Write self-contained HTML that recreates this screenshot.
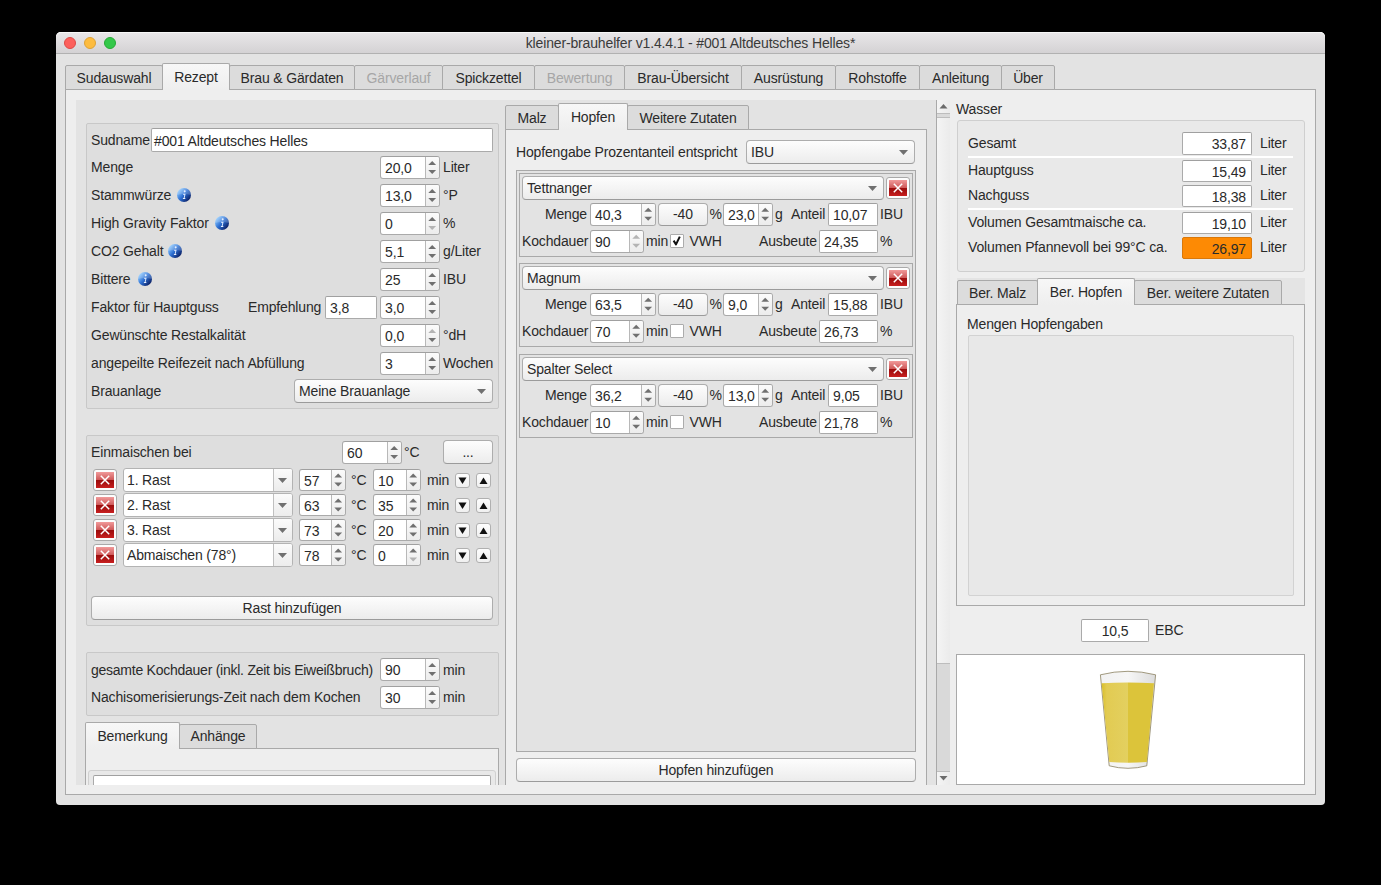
<!DOCTYPE html>
<html><head><meta charset="utf-8"><style>
*{margin:0;padding:0;box-sizing:border-box}
html,body{width:1381px;height:885px;overflow:hidden;background:#000}
body{position:relative;font-family:"Liberation Sans",sans-serif;font-size:14px;letter-spacing:-0.15px;color:#2a2a2a}
div,span,svg{position:absolute}
.t{line-height:18px;white-space:nowrap}
.win{left:56px;top:32px;width:1269px;height:772.5px;background:#e3e3e3;border-radius:5px 5px 4px 4px}
.title{left:56px;top:32px;width:1269px;height:22px;border-radius:5px 5px 0 0;background:linear-gradient(#e9e7e9,#d4d2d4);border-bottom:1px solid #b1b1b1;box-shadow:inset 0 1px 0 #f7f7f7}
.tl{width:12px;height:12px;border-radius:50%;border:0.5px solid}
.pane{background:#eeeeee;border:1px solid #a9a9a9}
.pane2{background:#eeeeee;border:1px solid #a9a9a9}
.pane3{background:#eeeeee;border:1px solid #a9a9a9}
.tb{background:#dcdcdc;border:1px solid #a9a9a9;border-radius:2px 2px 0 0}
.tb.sel{background:linear-gradient(#f7f7f7,#eeeeee);border-bottom:none}
.inner{background:#e3e3e3}
.gb{background:#dedede;border:1px solid #c8c8c8;border-radius:2px}
.gb2{background:#e8e8e8;border:1px solid #d0d0d0;border-radius:3px}
.wg{background:#e9e9e9;border:1px solid #cfcfcf;border-radius:3px}
.sp{background:#fff;border:1px solid #aaaaaa;border-top-color:#a0a0a0;border-radius:3px;overflow:hidden}
.spa{top:0;bottom:0;border-left:1px solid #b8b8b8;background:linear-gradient(#fbfbfb,#ececec)}
.le{background:#fff;border:1px solid #aaaaaa;border-top-color:#a0a0a0;border-radius:2px}
.pb{background:linear-gradient(#fdfdfd,#ececec);border:1px solid #adadad;border-bottom-color:#9b9b9b;border-radius:4px}
.ec{background:#fff;border:1px solid #b3b3b3;border-radius:3px;overflow:hidden}
.eca{top:0;bottom:0;border-left:1px solid #c0c0c0;background:linear-gradient(#fbfbfb,#ececec)}
.xb{background:#fdfdfd;border:1px solid #a9a9a9;border-radius:3px}
.xr{left:2px;top:2px;right:2px;bottom:2px;background:linear-gradient(#f19a9a 0%,#cf5a5a 48%,#9a0c0c 50%,#b31616 80%,#c92020 100%)}
.sb{background:linear-gradient(#fefefe,#f0f0f0);border:1px solid #b0b0b0;border-radius:3px}
.sa{background:#e3e3e3;border:1px solid #a9a9a9}
.hg{background:#e3e3e3;border:1px solid #a9a9a9}
.chk{width:14px;height:14px;background:#fff;border:1px solid #acacac;border-radius:1px}
.chart{background:#e8e8e8;border:1px solid #d2d2d2;border-radius:2px}
.beer{background:#fff;border:1px solid #a9a9a9}
.sbt{background:linear-gradient(90deg,#f4f4f4,#ebebeb)}
.sbband{background:#dadada;border-top:1px solid #bdbdbd;border-bottom:1px solid #bdbdbd}
.sbslider{background:#d9d9d9;border-top:1px solid #bdbdbd;border-bottom:1px solid #bdbdbd}
.a{position:absolute}
</style></head><body>
<div class="win"></div>
<div class="title"></div>
<div class="tl" style="left:64px;top:37px;background:#fc605c;border-color:#de4a46"></div>
<div class="tl" style="left:84px;top:37px;background:#fdbc40;border-color:#dea236"></div>
<div class="tl" style="left:104px;top:37px;background:#34c84a;border-color:#27aa35"></div>
<span class="t" style="left:56px;width:1269px;text-align:center;top:33.65px;color:#3a3a3a">kleiner-brauhelfer v1.4.4.1 - #001 Altdeutsches Helles*</span>
<div class="pane" style="left:65px;top:89px;width:1251px;height:706px;"></div>
<div class="tb" style="left:65px;top:65px;width:98px;height:25px"></div>
<span class="t" style="left:65px;width:98px;text-align:center;top:68.95px;">Sudauswahl</span>
<div class="tb" style="left:229px;top:65px;width:126px;height:25px"></div>
<span class="t" style="left:229px;width:126px;text-align:center;top:68.95px;">Brau &amp; Gärdaten</span>
<div class="tb" style="left:354px;top:65px;width:89px;height:25px"></div>
<span class="t" style="left:354px;width:89px;text-align:center;top:68.95px;color:#a6a6a6">Gärverlauf</span>
<div class="tb" style="left:442px;top:65px;width:93px;height:25px"></div>
<span class="t" style="left:442px;width:93px;text-align:center;top:68.95px;">Spickzettel</span>
<div class="tb" style="left:534px;top:65px;width:91px;height:25px"></div>
<span class="t" style="left:534px;width:91px;text-align:center;top:68.95px;color:#a6a6a6">Bewertung</span>
<div class="tb" style="left:624px;top:65px;width:118px;height:25px"></div>
<span class="t" style="left:624px;width:118px;text-align:center;top:68.95px;">Brau-Übersicht</span>
<div class="tb" style="left:741px;top:65px;width:95px;height:25px"></div>
<span class="t" style="left:741px;width:95px;text-align:center;top:68.95px;">Ausrüstung</span>
<div class="tb" style="left:835px;top:65px;width:85px;height:25px"></div>
<span class="t" style="left:835px;width:85px;text-align:center;top:68.95px;">Rohstoffe</span>
<div class="tb" style="left:919px;top:65px;width:83px;height:25px"></div>
<span class="t" style="left:919px;width:83px;text-align:center;top:68.95px;">Anleitung</span>
<div class="tb" style="left:1001px;top:65px;width:54px;height:25px"></div>
<span class="t" style="left:1001px;width:54px;text-align:center;top:68.95px;">Über</span>
<div class="tb sel" style="left:162px;top:63px;width:68px;height:27px"></div>
<span class="t" style="left:162px;width:68px;text-align:center;top:68.15px;">Rezept</span>
<div style="left:0;top:0;width:1381px;height:785px;overflow:hidden">
<div class="inner" style="left:76px;top:100px;width:860px;height:685px;"></div>
<div class="" style="left:936px;top:100px;width:1px;height:685px;background:#a9a9a9"></div>
<div class="sbt" style="left:937px;top:100px;width:13px;height:685px;"></div>
<div class="sbband" style="left:937px;top:113px;width:13px;height:5px;"></div>
<div class="sbslider" style="left:937px;top:663px;width:13px;height:109px;"></div>
<svg class="a" width="13" height="13" style="left:937px;top:100px"><path d="M2.5 8.5 L10.5 8.5 L6.5 4 Z" fill="#6b6b6b"/></svg>
<svg class="a" width="13" height="13" style="left:937px;top:772px"><path d="M2.5 4 L10.5 4 L6.5 8.5 Z" fill="#6b6b6b"/></svg>
<div class="gb" style="left:86px;top:123px;width:413px;height:286px;"></div>
<span class="t" style="left:91px;top:130.95px;">Sudname</span>
<div class="le" style="left:151px;top:128px;width:342px;height:24px;"></div>
<span class="t" style="left:154px;top:131.85px;">#001 Altdeutsches Helles</span>
<span class="t" style="left:91px;top:157.95px;">Menge</span>
<div class="sp" style="left:380px;top:156px;width:60px;height:23px">
<div class="spa" style="left:44px;width:16px"><svg width="14" height="21" style="position:absolute;left:0;top:0"><path d="M2.3000000000000003 8.0 L10.1 8.0 L6.2 4.1 Z" fill="#707070"/><path d="M2.3000000000000003 13.0 L10.1 13.0 L6.2 16.9 Z" fill="#707070"/></svg></div>
</div>
<span class="t" style="left:385px;top:159.35px;">20,0</span>
<span class="t" style="left:443px;top:157.95px;">Liter</span>
<span class="t" style="left:91px;top:185.95px;">Stammwürze</span>
<div class="sp" style="left:380px;top:184px;width:60px;height:23px">
<div class="spa" style="left:44px;width:16px"><svg width="14" height="21" style="position:absolute;left:0;top:0"><path d="M2.3000000000000003 8.0 L10.1 8.0 L6.2 4.1 Z" fill="#707070"/><path d="M2.3000000000000003 13.0 L10.1 13.0 L6.2 16.9 Z" fill="#707070"/></svg></div>
</div>
<span class="t" style="left:385px;top:187.35px;">13,0</span>
<span class="t" style="left:443px;top:185.95px;">°P</span>
<svg class="a" width="16" height="16" style="left:176px;top:186.5px"><defs><linearGradient id="ib184" x1="0.1" y1="0.2" x2="0.9" y2="0.9"><stop offset="0" stop-color="#8cc8ff"/><stop offset="0.45" stop-color="#2d6fd2"/><stop offset="1" stop-color="#08185a"/></linearGradient></defs><circle cx="8" cy="8" r="7" fill="url(#ib184)"/><path d="M1.1 8 A6.9 6.9 0 0 1 14.9 8 Q8 6.2 1.1 8Z" fill="#fff" opacity="0.18"/><ellipse cx="8.7" cy="4.3" rx="1.0" ry="1.1" fill="#e6efff"/><path d="M7.2 6.8 L9.6 6.8 L8.6 11.1 L9.4 11.1 L9.2 12.0 L6.8 12.0 L7.0 11.1 L7.7 11.1 L8.4 7.7 L7.0 7.7 Z" fill="#e6efff"/></svg>
<span class="t" style="left:91px;top:213.95px;">High Gravity Faktor</span>
<div class="sp" style="left:380px;top:212px;width:60px;height:23px">
<div class="spa" style="left:44px;width:16px"><svg width="14" height="21" style="position:absolute;left:0;top:0"><path d="M2.3000000000000003 8.0 L10.1 8.0 L6.2 4.1 Z" fill="#707070"/><path d="M2.3000000000000003 13.0 L10.1 13.0 L6.2 16.9 Z" fill="#b4b4b4"/></svg></div>
</div>
<span class="t" style="left:385px;top:215.35px;">0</span>
<span class="t" style="left:443px;top:213.95px;">%</span>
<svg class="a" width="16" height="16" style="left:214px;top:214.5px"><defs><linearGradient id="ib222" x1="0.1" y1="0.2" x2="0.9" y2="0.9"><stop offset="0" stop-color="#8cc8ff"/><stop offset="0.45" stop-color="#2d6fd2"/><stop offset="1" stop-color="#08185a"/></linearGradient></defs><circle cx="8" cy="8" r="7" fill="url(#ib222)"/><path d="M1.1 8 A6.9 6.9 0 0 1 14.9 8 Q8 6.2 1.1 8Z" fill="#fff" opacity="0.18"/><ellipse cx="8.7" cy="4.3" rx="1.0" ry="1.1" fill="#e6efff"/><path d="M7.2 6.8 L9.6 6.8 L8.6 11.1 L9.4 11.1 L9.2 12.0 L6.8 12.0 L7.0 11.1 L7.7 11.1 L8.4 7.7 L7.0 7.7 Z" fill="#e6efff"/></svg>
<span class="t" style="left:91px;top:241.95px;">CO2 Gehalt</span>
<div class="sp" style="left:380px;top:240px;width:60px;height:23px">
<div class="spa" style="left:44px;width:16px"><svg width="14" height="21" style="position:absolute;left:0;top:0"><path d="M2.3000000000000003 8.0 L10.1 8.0 L6.2 4.1 Z" fill="#707070"/><path d="M2.3000000000000003 13.0 L10.1 13.0 L6.2 16.9 Z" fill="#707070"/></svg></div>
</div>
<span class="t" style="left:385px;top:243.35px;">5,1</span>
<span class="t" style="left:443px;top:241.95px;">g/Liter</span>
<svg class="a" width="16" height="16" style="left:167px;top:242.5px"><defs><linearGradient id="ib175" x1="0.1" y1="0.2" x2="0.9" y2="0.9"><stop offset="0" stop-color="#8cc8ff"/><stop offset="0.45" stop-color="#2d6fd2"/><stop offset="1" stop-color="#08185a"/></linearGradient></defs><circle cx="8" cy="8" r="7" fill="url(#ib175)"/><path d="M1.1 8 A6.9 6.9 0 0 1 14.9 8 Q8 6.2 1.1 8Z" fill="#fff" opacity="0.18"/><ellipse cx="8.7" cy="4.3" rx="1.0" ry="1.1" fill="#e6efff"/><path d="M7.2 6.8 L9.6 6.8 L8.6 11.1 L9.4 11.1 L9.2 12.0 L6.8 12.0 L7.0 11.1 L7.7 11.1 L8.4 7.7 L7.0 7.7 Z" fill="#e6efff"/></svg>
<span class="t" style="left:91px;top:269.95px;">Bittere</span>
<div class="sp" style="left:380px;top:268px;width:60px;height:23px">
<div class="spa" style="left:44px;width:16px"><svg width="14" height="21" style="position:absolute;left:0;top:0"><path d="M2.3000000000000003 8.0 L10.1 8.0 L6.2 4.1 Z" fill="#707070"/><path d="M2.3000000000000003 13.0 L10.1 13.0 L6.2 16.9 Z" fill="#707070"/></svg></div>
</div>
<span class="t" style="left:385px;top:271.35px;">25</span>
<span class="t" style="left:443px;top:269.95px;">IBU</span>
<svg class="a" width="16" height="16" style="left:137px;top:270.5px"><defs><linearGradient id="ib145" x1="0.1" y1="0.2" x2="0.9" y2="0.9"><stop offset="0" stop-color="#8cc8ff"/><stop offset="0.45" stop-color="#2d6fd2"/><stop offset="1" stop-color="#08185a"/></linearGradient></defs><circle cx="8" cy="8" r="7" fill="url(#ib145)"/><path d="M1.1 8 A6.9 6.9 0 0 1 14.9 8 Q8 6.2 1.1 8Z" fill="#fff" opacity="0.18"/><ellipse cx="8.7" cy="4.3" rx="1.0" ry="1.1" fill="#e6efff"/><path d="M7.2 6.8 L9.6 6.8 L8.6 11.1 L9.4 11.1 L9.2 12.0 L6.8 12.0 L7.0 11.1 L7.7 11.1 L8.4 7.7 L7.0 7.7 Z" fill="#e6efff"/></svg>
<span class="t" style="left:91px;top:297.95px;">Faktor für Hauptguss</span>
<div class="sp" style="left:380px;top:296px;width:60px;height:23px">
<div class="spa" style="left:44px;width:16px"><svg width="14" height="21" style="position:absolute;left:0;top:0"><path d="M2.3000000000000003 8.0 L10.1 8.0 L6.2 4.1 Z" fill="#707070"/><path d="M2.3000000000000003 13.0 L10.1 13.0 L6.2 16.9 Z" fill="#707070"/></svg></div>
</div>
<span class="t" style="left:385px;top:299.35px;">3,0</span>
<span class="t" style="left:91px;top:325.95px;">Gewünschte Restalkalität</span>
<div class="sp" style="left:380px;top:324px;width:60px;height:23px">
<div class="spa" style="left:44px;width:16px"><svg width="14" height="21" style="position:absolute;left:0;top:0"><path d="M2.3000000000000003 8.0 L10.1 8.0 L6.2 4.1 Z" fill="#b4b4b4"/><path d="M2.3000000000000003 13.0 L10.1 13.0 L6.2 16.9 Z" fill="#707070"/></svg></div>
</div>
<span class="t" style="left:385px;top:327.35px;">0,0</span>
<span class="t" style="left:443px;top:325.95px;">°dH</span>
<span class="t" style="left:91px;top:353.95px;">angepeilte Reifezeit nach Abfüllung</span>
<div class="sp" style="left:380px;top:352px;width:60px;height:23px">
<div class="spa" style="left:44px;width:16px"><svg width="14" height="21" style="position:absolute;left:0;top:0"><path d="M2.3000000000000003 8.0 L10.1 8.0 L6.2 4.1 Z" fill="#707070"/><path d="M2.3000000000000003 13.0 L10.1 13.0 L6.2 16.9 Z" fill="#707070"/></svg></div>
</div>
<span class="t" style="left:385px;top:355.35px;">3</span>
<span class="t" style="left:443px;top:353.95px;">Wochen</span>
<span class="t" style="left:248px;top:297.95px;">Empfehlung</span>
<div class="le" style="left:325px;top:296px;width:52px;height:23px;"></div>
<span class="t" style="left:330px;top:299.35px;">3,8</span>
<span class="t" style="left:91px;top:381.95px;">Brauanlage</span>
<div class="pb" style="left:294px;top:379px;width:199px;height:24px"></div>
<svg class="a" width="10" height="6" style="left:477px;top:388.5px"><path d="M0 0 L9 0 L4.5 5 Z" fill="#707070"/></svg>
<span class="t" style="left:299px;top:381.85px;">Meine Brauanlage</span>
<div class="gb" style="left:86px;top:435px;width:413px;height:191px;"></div>
<span class="t" style="left:91px;top:442.95px;">Einmaischen bei</span>
<div class="sp" style="left:342px;top:441px;width:60px;height:23px">
<div class="spa" style="left:44px;width:16px"><svg width="14" height="21" style="position:absolute;left:0;top:0"><path d="M2.3000000000000003 8.0 L10.1 8.0 L6.2 4.1 Z" fill="#707070"/><path d="M2.3000000000000003 13.0 L10.1 13.0 L6.2 16.9 Z" fill="#707070"/></svg></div>
</div>
<span class="t" style="left:347px;top:444.35px;">60</span>
<span class="t" style="left:404px;top:442.95px;">°C</span>
<div class="pb" style="left:443px;top:440px;width:50px;height:24px"></div>
<span class="t" style="left:443px;width:50px;text-align:center;top:442.85px;">...</span>
<div class="xb" style="left:93px;top:469px;width:24px;height:22px"><div class="xr"></div><svg width="24" height="22" style="position:absolute;left:-1px;top:-1px"><path d="M7.8 6.8 L16.2 15.2 M16.2 6.8 L7.8 15.2" stroke="#fff" stroke-width="1.5"/></svg></div>
<div class="ec" style="left:123px;top:468px;width:170px;height:24px"><div class="eca" style="left:148.5px;width:20.5px"></div></div>
<svg class="a" width="10" height="6" style="left:277.75px;top:477.5px"><path d="M0 0 L9 0 L4.5 5 Z" fill="#707070"/></svg>
<span class="t" style="left:127px;top:470.85px;">1. Rast</span>
<div class="sp" style="left:299px;top:469px;width:47px;height:22px">
<div class="spa" style="left:31px;width:16px"><svg width="14" height="20" style="position:absolute;left:0;top:0"><path d="M2.3000000000000003 7.5 L10.1 7.5 L6.2 3.5999999999999996 Z" fill="#707070"/><path d="M2.3000000000000003 12.5 L10.1 12.5 L6.2 16.4 Z" fill="#707070"/></svg></div>
</div>
<span class="t" style="left:304px;top:471.85px;">57</span>
<span class="t" style="left:351px;top:470.95px;">°C</span>
<div class="sp" style="left:373px;top:469px;width:48px;height:22px">
<div class="spa" style="left:32px;width:16px"><svg width="14" height="20" style="position:absolute;left:0;top:0"><path d="M2.3000000000000003 7.5 L10.1 7.5 L6.2 3.5999999999999996 Z" fill="#707070"/><path d="M2.3000000000000003 12.5 L10.1 12.5 L6.2 16.4 Z" fill="#707070"/></svg></div>
</div>
<span class="t" style="left:378px;top:471.85px;">10</span>
<span class="t" style="left:427px;top:470.95px;">min</span>
<div class="sb" style="left:455px;top:473px;width:15px;height:15px"></div>
<svg class="a" width="15" height="15" style="left:455px;top:473px"><path d="M3.5 4.5 L11.5 4.5 L7.5 11 Z" fill="#111"/></svg>
<div class="sb" style="left:476px;top:473px;width:15px;height:15px"></div>
<svg class="a" width="15" height="15" style="left:476px;top:473px"><path d="M3.5 11 L11.5 11 L7.5 4.5 Z" fill="#111"/></svg>
<div class="xb" style="left:93px;top:494px;width:24px;height:22px"><div class="xr"></div><svg width="24" height="22" style="position:absolute;left:-1px;top:-1px"><path d="M7.8 6.8 L16.2 15.2 M16.2 6.8 L7.8 15.2" stroke="#fff" stroke-width="1.5"/></svg></div>
<div class="ec" style="left:123px;top:493px;width:170px;height:24px"><div class="eca" style="left:148.5px;width:20.5px"></div></div>
<svg class="a" width="10" height="6" style="left:277.75px;top:502.5px"><path d="M0 0 L9 0 L4.5 5 Z" fill="#707070"/></svg>
<span class="t" style="left:127px;top:495.85px;">2. Rast</span>
<div class="sp" style="left:299px;top:494px;width:47px;height:22px">
<div class="spa" style="left:31px;width:16px"><svg width="14" height="20" style="position:absolute;left:0;top:0"><path d="M2.3000000000000003 7.5 L10.1 7.5 L6.2 3.5999999999999996 Z" fill="#707070"/><path d="M2.3000000000000003 12.5 L10.1 12.5 L6.2 16.4 Z" fill="#707070"/></svg></div>
</div>
<span class="t" style="left:304px;top:496.85px;">63</span>
<span class="t" style="left:351px;top:495.95px;">°C</span>
<div class="sp" style="left:373px;top:494px;width:48px;height:22px">
<div class="spa" style="left:32px;width:16px"><svg width="14" height="20" style="position:absolute;left:0;top:0"><path d="M2.3000000000000003 7.5 L10.1 7.5 L6.2 3.5999999999999996 Z" fill="#707070"/><path d="M2.3000000000000003 12.5 L10.1 12.5 L6.2 16.4 Z" fill="#707070"/></svg></div>
</div>
<span class="t" style="left:378px;top:496.85px;">35</span>
<span class="t" style="left:427px;top:495.95px;">min</span>
<div class="sb" style="left:455px;top:498px;width:15px;height:15px"></div>
<svg class="a" width="15" height="15" style="left:455px;top:498px"><path d="M3.5 4.5 L11.5 4.5 L7.5 11 Z" fill="#111"/></svg>
<div class="sb" style="left:476px;top:498px;width:15px;height:15px"></div>
<svg class="a" width="15" height="15" style="left:476px;top:498px"><path d="M3.5 11 L11.5 11 L7.5 4.5 Z" fill="#111"/></svg>
<div class="xb" style="left:93px;top:519px;width:24px;height:22px"><div class="xr"></div><svg width="24" height="22" style="position:absolute;left:-1px;top:-1px"><path d="M7.8 6.8 L16.2 15.2 M16.2 6.8 L7.8 15.2" stroke="#fff" stroke-width="1.5"/></svg></div>
<div class="ec" style="left:123px;top:518px;width:170px;height:24px"><div class="eca" style="left:148.5px;width:20.5px"></div></div>
<svg class="a" width="10" height="6" style="left:277.75px;top:527.5px"><path d="M0 0 L9 0 L4.5 5 Z" fill="#707070"/></svg>
<span class="t" style="left:127px;top:520.85px;">3. Rast</span>
<div class="sp" style="left:299px;top:519px;width:47px;height:22px">
<div class="spa" style="left:31px;width:16px"><svg width="14" height="20" style="position:absolute;left:0;top:0"><path d="M2.3000000000000003 7.5 L10.1 7.5 L6.2 3.5999999999999996 Z" fill="#707070"/><path d="M2.3000000000000003 12.5 L10.1 12.5 L6.2 16.4 Z" fill="#707070"/></svg></div>
</div>
<span class="t" style="left:304px;top:521.85px;">73</span>
<span class="t" style="left:351px;top:520.95px;">°C</span>
<div class="sp" style="left:373px;top:519px;width:48px;height:22px">
<div class="spa" style="left:32px;width:16px"><svg width="14" height="20" style="position:absolute;left:0;top:0"><path d="M2.3000000000000003 7.5 L10.1 7.5 L6.2 3.5999999999999996 Z" fill="#707070"/><path d="M2.3000000000000003 12.5 L10.1 12.5 L6.2 16.4 Z" fill="#707070"/></svg></div>
</div>
<span class="t" style="left:378px;top:521.85px;">20</span>
<span class="t" style="left:427px;top:520.95px;">min</span>
<div class="sb" style="left:455px;top:523px;width:15px;height:15px"></div>
<svg class="a" width="15" height="15" style="left:455px;top:523px"><path d="M3.5 4.5 L11.5 4.5 L7.5 11 Z" fill="#111"/></svg>
<div class="sb" style="left:476px;top:523px;width:15px;height:15px"></div>
<svg class="a" width="15" height="15" style="left:476px;top:523px"><path d="M3.5 11 L11.5 11 L7.5 4.5 Z" fill="#111"/></svg>
<div class="xb" style="left:93px;top:544px;width:24px;height:22px"><div class="xr"></div><svg width="24" height="22" style="position:absolute;left:-1px;top:-1px"><path d="M7.8 6.8 L16.2 15.2 M16.2 6.8 L7.8 15.2" stroke="#fff" stroke-width="1.5"/></svg></div>
<div class="ec" style="left:123px;top:543px;width:170px;height:24px"><div class="eca" style="left:148.5px;width:20.5px"></div></div>
<svg class="a" width="10" height="6" style="left:277.75px;top:552.5px"><path d="M0 0 L9 0 L4.5 5 Z" fill="#707070"/></svg>
<span class="t" style="left:127px;top:545.85px;">Abmaischen (78°)</span>
<div class="sp" style="left:299px;top:544px;width:47px;height:22px">
<div class="spa" style="left:31px;width:16px"><svg width="14" height="20" style="position:absolute;left:0;top:0"><path d="M2.3000000000000003 7.5 L10.1 7.5 L6.2 3.5999999999999996 Z" fill="#707070"/><path d="M2.3000000000000003 12.5 L10.1 12.5 L6.2 16.4 Z" fill="#707070"/></svg></div>
</div>
<span class="t" style="left:304px;top:546.85px;">78</span>
<span class="t" style="left:351px;top:545.95px;">°C</span>
<div class="sp" style="left:373px;top:544px;width:48px;height:22px">
<div class="spa" style="left:32px;width:16px"><svg width="14" height="20" style="position:absolute;left:0;top:0"><path d="M2.3000000000000003 7.5 L10.1 7.5 L6.2 3.5999999999999996 Z" fill="#707070"/><path d="M2.3000000000000003 12.5 L10.1 12.5 L6.2 16.4 Z" fill="#b4b4b4"/></svg></div>
</div>
<span class="t" style="left:378px;top:546.85px;">0</span>
<span class="t" style="left:427px;top:545.95px;">min</span>
<div class="sb" style="left:455px;top:548px;width:15px;height:15px"></div>
<svg class="a" width="15" height="15" style="left:455px;top:548px"><path d="M3.5 4.5 L11.5 4.5 L7.5 11 Z" fill="#111"/></svg>
<div class="sb" style="left:476px;top:548px;width:15px;height:15px"></div>
<svg class="a" width="15" height="15" style="left:476px;top:548px"><path d="M3.5 11 L11.5 11 L7.5 4.5 Z" fill="#111"/></svg>
<div class="pb" style="left:91px;top:596px;width:402px;height:24px"></div>
<span class="t" style="left:91px;width:402px;text-align:center;top:598.85px;">Rast hinzufügen</span>
<div class="gb" style="left:86px;top:652px;width:413px;height:64px;"></div>
<span class="t" style="left:91px;top:660.65px;letter-spacing:-0.25px">gesamte Kochdauer (inkl. Zeit bis Eiweißbruch)</span>
<div class="sp" style="left:380px;top:658px;width:60px;height:23px">
<div class="spa" style="left:44px;width:16px"><svg width="14" height="21" style="position:absolute;left:0;top:0"><path d="M2.3000000000000003 8.0 L10.1 8.0 L6.2 4.1 Z" fill="#707070"/><path d="M2.3000000000000003 13.0 L10.1 13.0 L6.2 16.9 Z" fill="#707070"/></svg></div>
</div>
<span class="t" style="left:385px;top:661.35px;">90</span>
<span class="t" style="left:443px;top:660.65px;">min</span>
<span class="t" style="left:91px;top:688.45px;">Nachisomerisierungs-Zeit nach dem Kochen</span>
<div class="sp" style="left:380px;top:686px;width:60px;height:23px">
<div class="spa" style="left:44px;width:16px"><svg width="14" height="21" style="position:absolute;left:0;top:0"><path d="M2.3000000000000003 8.0 L10.1 8.0 L6.2 4.1 Z" fill="#707070"/><path d="M2.3000000000000003 13.0 L10.1 13.0 L6.2 16.9 Z" fill="#707070"/></svg></div>
</div>
<span class="t" style="left:385px;top:689.35px;">30</span>
<span class="t" style="left:443px;top:688.45px;">min</span>
<div class="pane2" style="left:85px;top:748px;width:414px;height:52px;"></div>
<div class="tb" style="left:179px;top:724px;width:78px;height:25px"></div>
<span class="t" style="left:179px;width:78px;text-align:center;top:727.45px;">Anhänge</span>
<div class="tb sel" style="left:85px;top:722px;width:95px;height:27px"></div>
<span class="t" style="left:85px;width:95px;text-align:center;top:726.95px;">Bemerkung</span>
<div class="gb2" style="left:88px;top:770px;width:408px;height:30px;"></div>
<div class="le" style="left:93px;top:775px;width:398px;height:25px;"></div>
<div class="pane2" style="left:505px;top:129px;width:422px;height:671px;"></div>
<div class="tb" style="left:505px;top:105px;width:54px;height:25px"></div>
<span class="t" style="left:505px;width:54px;text-align:center;top:108.95px;">Malz</span>
<div class="tb" style="left:627px;top:105px;width:122px;height:25px"></div>
<span class="t" style="left:627px;width:122px;text-align:center;top:108.95px;">Weitere Zutaten</span>
<div class="tb sel" style="left:558px;top:103px;width:70px;height:27px"></div>
<span class="t" style="left:558px;width:70px;text-align:center;top:107.95px;">Hopfen</span>
<span class="t" style="left:516px;top:142.75px;">Hopfengabe Prozentanteil entspricht</span>
<div class="pb" style="left:746px;top:140px;width:169px;height:24px"></div>
<svg class="a" width="10" height="6" style="left:899px;top:149.5px"><path d="M0 0 L9 0 L4.5 5 Z" fill="#707070"/></svg>
<span class="t" style="left:751px;top:142.85px;">IBU</span>
<div class="sa" style="left:516px;top:170px;width:400px;height:582px;"></div>
<div class="hg" style="left:519px;top:173px;width:394px;height:84px;"></div>
<div class="pb" style="left:522px;top:176px;width:362px;height:24px"></div>
<svg class="a" width="10" height="6" style="left:868px;top:185.5px"><path d="M0 0 L9 0 L4.5 5 Z" fill="#707070"/></svg>
<span class="t" style="left:527px;top:178.85px;">Tettnanger</span>
<div class="xb" style="left:886px;top:177px;width:24px;height:22px"><div class="xr"></div><svg width="24" height="22" style="position:absolute;left:-1px;top:-1px"><path d="M7.8 6.8 L16.2 15.2 M16.2 6.8 L7.8 15.2" stroke="#fff" stroke-width="1.5"/></svg></div>
<span class="t" style="right:794px;top:204.95px;">Menge</span>
<div class="sp" style="left:590px;top:203px;width:66px;height:22.5px">
<div class="spa" style="left:50px;width:16px"><svg width="14" height="20.5" style="position:absolute;left:0;top:0"><path d="M2.3000000000000003 7.75 L10.1 7.75 L6.2 3.8499999999999996 Z" fill="#707070"/><path d="M2.3000000000000003 12.75 L10.1 12.75 L6.2 16.65 Z" fill="#707070"/></svg></div>
</div>
<span class="t" style="left:595px;top:206.10px;">40,3</span>
<div class="pb" style="left:658px;top:202.5px;width:50px;height:23.0px"></div>
<span class="t" style="left:658px;width:50px;text-align:center;top:204.85px;">-40</span>
<span class="t" style="left:709.5px;top:204.95px;">%</span>
<div class="sp" style="left:723px;top:203px;width:50px;height:22.5px">
<div class="spa" style="left:34px;width:16px"><svg width="14" height="20.5" style="position:absolute;left:0;top:0"><path d="M2.3000000000000003 7.75 L10.1 7.75 L6.2 3.8499999999999996 Z" fill="#707070"/><path d="M2.3000000000000003 12.75 L10.1 12.75 L6.2 16.65 Z" fill="#707070"/></svg></div>
</div>
<span class="t" style="left:728px;top:206.10px;">23,0</span>
<span class="t" style="left:775px;top:204.95px;">g</span>
<span class="t" style="left:791px;top:204.95px;">Anteil</span>
<div class="le" style="left:828px;top:203px;width:50px;height:22.5px;"></div>
<span class="t" style="left:833px;top:206.10px;">10,07</span>
<span class="t" style="left:880px;top:204.95px;">IBU</span>
<span class="t" style="left:522px;top:231.95px;">Kochdauer</span>
<div class="sp" style="left:590px;top:230px;width:54px;height:22.5px">
<div class="spa" style="left:38px;width:16px"><svg width="14" height="20.5" style="position:absolute;left:0;top:0"><path d="M2.3000000000000003 7.75 L10.1 7.75 L6.2 3.8499999999999996 Z" fill="#b4b4b4"/><path d="M2.3000000000000003 12.75 L10.1 12.75 L6.2 16.65 Z" fill="#b4b4b4"/></svg></div>
</div>
<span class="t" style="left:595px;top:233.10px;">90</span>
<span class="t" style="left:646px;top:231.95px;">min</span>
<div class="chk" style="left:670px;top:234px"></div>
<svg class="a" width="13" height="13" style="left:670px;top:234px"><path d="M3.6 6.6 L6 10.4 L9.8 2.6" stroke="#111" stroke-width="2" fill="none" stroke-linejoin="round"/></svg>
<span class="t" style="left:689.5px;top:231.95px;">VWH</span>
<span class="t" style="left:759px;top:231.95px;">Ausbeute</span>
<div class="le" style="left:819px;top:230px;width:59px;height:22.5px;"></div>
<span class="t" style="left:824px;top:233.10px;">24,35</span>
<span class="t" style="left:880px;top:231.95px;">%</span>
<div class="hg" style="left:519px;top:263px;width:394px;height:84px;"></div>
<div class="pb" style="left:522px;top:266px;width:362px;height:24px"></div>
<svg class="a" width="10" height="6" style="left:868px;top:275.5px"><path d="M0 0 L9 0 L4.5 5 Z" fill="#707070"/></svg>
<span class="t" style="left:527px;top:268.85px;">Magnum</span>
<div class="xb" style="left:886px;top:267px;width:24px;height:22px"><div class="xr"></div><svg width="24" height="22" style="position:absolute;left:-1px;top:-1px"><path d="M7.8 6.8 L16.2 15.2 M16.2 6.8 L7.8 15.2" stroke="#fff" stroke-width="1.5"/></svg></div>
<span class="t" style="right:794px;top:294.95px;">Menge</span>
<div class="sp" style="left:590px;top:293px;width:66px;height:22.5px">
<div class="spa" style="left:50px;width:16px"><svg width="14" height="20.5" style="position:absolute;left:0;top:0"><path d="M2.3000000000000003 7.75 L10.1 7.75 L6.2 3.8499999999999996 Z" fill="#707070"/><path d="M2.3000000000000003 12.75 L10.1 12.75 L6.2 16.65 Z" fill="#707070"/></svg></div>
</div>
<span class="t" style="left:595px;top:296.10px;">63,5</span>
<div class="pb" style="left:658px;top:292.5px;width:50px;height:23.0px"></div>
<span class="t" style="left:658px;width:50px;text-align:center;top:294.85px;">-40</span>
<span class="t" style="left:709.5px;top:294.95px;">%</span>
<div class="sp" style="left:723px;top:293px;width:50px;height:22.5px">
<div class="spa" style="left:34px;width:16px"><svg width="14" height="20.5" style="position:absolute;left:0;top:0"><path d="M2.3000000000000003 7.75 L10.1 7.75 L6.2 3.8499999999999996 Z" fill="#707070"/><path d="M2.3000000000000003 12.75 L10.1 12.75 L6.2 16.65 Z" fill="#707070"/></svg></div>
</div>
<span class="t" style="left:728px;top:296.10px;">9,0</span>
<span class="t" style="left:775px;top:294.95px;">g</span>
<span class="t" style="left:791px;top:294.95px;">Anteil</span>
<div class="le" style="left:828px;top:293px;width:50px;height:22.5px;"></div>
<span class="t" style="left:833px;top:296.10px;">15,88</span>
<span class="t" style="left:880px;top:294.95px;">IBU</span>
<span class="t" style="left:522px;top:321.95px;">Kochdauer</span>
<div class="sp" style="left:590px;top:320px;width:54px;height:22.5px">
<div class="spa" style="left:38px;width:16px"><svg width="14" height="20.5" style="position:absolute;left:0;top:0"><path d="M2.3000000000000003 7.75 L10.1 7.75 L6.2 3.8499999999999996 Z" fill="#707070"/><path d="M2.3000000000000003 12.75 L10.1 12.75 L6.2 16.65 Z" fill="#707070"/></svg></div>
</div>
<span class="t" style="left:595px;top:323.10px;">70</span>
<span class="t" style="left:646px;top:321.95px;">min</span>
<div class="chk" style="left:670px;top:324px"></div>
<span class="t" style="left:689.5px;top:321.95px;">VWH</span>
<span class="t" style="left:759px;top:321.95px;">Ausbeute</span>
<div class="le" style="left:819px;top:320px;width:59px;height:22.5px;"></div>
<span class="t" style="left:824px;top:323.10px;">26,73</span>
<span class="t" style="left:880px;top:321.95px;">%</span>
<div class="hg" style="left:519px;top:354px;width:394px;height:84px;"></div>
<div class="pb" style="left:522px;top:357px;width:362px;height:24px"></div>
<svg class="a" width="10" height="6" style="left:868px;top:366.5px"><path d="M0 0 L9 0 L4.5 5 Z" fill="#707070"/></svg>
<span class="t" style="left:527px;top:359.85px;">Spalter Select</span>
<div class="xb" style="left:886px;top:358px;width:24px;height:22px"><div class="xr"></div><svg width="24" height="22" style="position:absolute;left:-1px;top:-1px"><path d="M7.8 6.8 L16.2 15.2 M16.2 6.8 L7.8 15.2" stroke="#fff" stroke-width="1.5"/></svg></div>
<span class="t" style="right:794px;top:385.95px;">Menge</span>
<div class="sp" style="left:590px;top:384px;width:66px;height:22.5px">
<div class="spa" style="left:50px;width:16px"><svg width="14" height="20.5" style="position:absolute;left:0;top:0"><path d="M2.3000000000000003 7.75 L10.1 7.75 L6.2 3.8499999999999996 Z" fill="#707070"/><path d="M2.3000000000000003 12.75 L10.1 12.75 L6.2 16.65 Z" fill="#707070"/></svg></div>
</div>
<span class="t" style="left:595px;top:387.10px;">36,2</span>
<div class="pb" style="left:658px;top:383.5px;width:50px;height:23.0px"></div>
<span class="t" style="left:658px;width:50px;text-align:center;top:385.85px;">-40</span>
<span class="t" style="left:709.5px;top:385.95px;">%</span>
<div class="sp" style="left:723px;top:384px;width:50px;height:22.5px">
<div class="spa" style="left:34px;width:16px"><svg width="14" height="20.5" style="position:absolute;left:0;top:0"><path d="M2.3000000000000003 7.75 L10.1 7.75 L6.2 3.8499999999999996 Z" fill="#707070"/><path d="M2.3000000000000003 12.75 L10.1 12.75 L6.2 16.65 Z" fill="#707070"/></svg></div>
</div>
<span class="t" style="left:728px;top:387.10px;">13,0</span>
<span class="t" style="left:775px;top:385.95px;">g</span>
<span class="t" style="left:791px;top:385.95px;">Anteil</span>
<div class="le" style="left:828px;top:384px;width:50px;height:22.5px;"></div>
<span class="t" style="left:833px;top:387.10px;">9,05</span>
<span class="t" style="left:880px;top:385.95px;">IBU</span>
<span class="t" style="left:522px;top:412.95px;">Kochdauer</span>
<div class="sp" style="left:590px;top:411px;width:54px;height:22.5px">
<div class="spa" style="left:38px;width:16px"><svg width="14" height="20.5" style="position:absolute;left:0;top:0"><path d="M2.3000000000000003 7.75 L10.1 7.75 L6.2 3.8499999999999996 Z" fill="#707070"/><path d="M2.3000000000000003 12.75 L10.1 12.75 L6.2 16.65 Z" fill="#707070"/></svg></div>
</div>
<span class="t" style="left:595px;top:414.10px;">10</span>
<span class="t" style="left:646px;top:412.95px;">min</span>
<div class="chk" style="left:670px;top:415px"></div>
<span class="t" style="left:689.5px;top:412.95px;">VWH</span>
<span class="t" style="left:759px;top:412.95px;">Ausbeute</span>
<div class="le" style="left:819px;top:411px;width:59px;height:22.5px;"></div>
<span class="t" style="left:824px;top:414.10px;">21,78</span>
<span class="t" style="left:880px;top:412.95px;">%</span>
<div class="pb" style="left:516px;top:758px;width:400px;height:24px"></div>
<span class="t" style="left:516px;width:400px;text-align:center;top:760.85px;">Hopfen hinzufügen</span>
</div>
<span class="t" style="left:956px;top:99.55px;">Wasser</span>
<div class="wg" style="left:957px;top:120px;width:348px;height:152px;"></div>
<span class="t" style="left:968px;top:133.95px;">Gesamt</span>
<div class="le" style="left:1182px;top:132px;width:70px;height:22.5px;"></div>
<span class="t" style="right:135px;top:135.10px;">33,87</span>
<span class="t" style="left:1260px;top:133.95px;">Liter</span>
<span class="t" style="left:968px;top:161.45px;">Hauptguss</span>
<div class="le" style="left:1182px;top:159.5px;width:70px;height:22.5px;"></div>
<span class="t" style="right:135px;top:162.60px;">15,49</span>
<span class="t" style="left:1260px;top:161.45px;">Liter</span>
<span class="t" style="left:968px;top:186.45px;">Nachguss</span>
<div class="le" style="left:1182px;top:184.5px;width:70px;height:22.5px;"></div>
<span class="t" style="right:135px;top:187.60px;">18,38</span>
<span class="t" style="left:1260px;top:186.45px;">Liter</span>
<span class="t" style="left:968px;top:213.45px;">Volumen Gesamtmaische ca.</span>
<div class="le" style="left:1182px;top:211.5px;width:70px;height:22.5px;"></div>
<span class="t" style="right:135px;top:214.60px;">19,10</span>
<span class="t" style="left:1260px;top:213.45px;">Liter</span>
<span class="t" style="left:968px;top:238.45px;">Volumen Pfannevoll bei 99°C ca.</span>
<div class="le" style="left:1182px;top:236.5px;width:70px;height:22.5px;background:#fd8a04;border-color:#d9780a"></div>
<span class="t" style="right:135px;top:239.60px;">26,97</span>
<span class="t" style="left:1260px;top:238.45px;">Liter</span>
<div class="" style="left:968px;top:156px;width:325px;height:2px;background:#ffffff"></div>
<div class="" style="left:968px;top:208px;width:325px;height:2px;background:#ffffff"></div>
<div class="" style="left:957px;top:278px;width:348px;height:27px;background:#e4e4e4"></div>
<div class="pane3" style="left:956px;top:304px;width:349px;height:302px;"></div>
<div class="tb" style="left:957px;top:280px;width:81px;height:25px"></div>
<span class="t" style="left:957px;width:81px;text-align:center;top:283.65px;">Ber. Malz</span>
<div class="tb" style="left:1134px;top:280px;width:148px;height:25px"></div>
<span class="t" style="left:1134px;width:148px;text-align:center;top:283.65px;">Ber. weitere Zutaten</span>
<div class="tb sel" style="left:1037px;top:278px;width:98px;height:27px"></div>
<span class="t" style="left:1037px;width:98px;text-align:center;top:282.95px;">Ber. Hopfen</span>
<span class="t" style="left:967px;top:314.55px;">Mengen Hopfengaben</span>
<div class="chart" style="left:968px;top:335px;width:326px;height:261px;"></div>
<div class="le" style="left:1081px;top:619px;width:68px;height:22.5px;"></div>
<span class="t" style="left:1081px;width:68px;text-align:center;top:622.10px;">10,5</span>
<span class="t" style="left:1155px;top:620.95px;">EBC</span>
<div class="beer" style="left:956px;top:654px;width:349px;height:131px;"></div>
<svg class="a" width="70" height="110" style="left:1095px;top:666px">
<defs>
<linearGradient id="bg1" x1="0" x2="1" y1="0" y2="0"><stop offset="0" stop-color="#d9bf2a"/><stop offset="0.1" stop-color="#e2cb52"/><stop offset="0.5" stop-color="#e3d060"/><stop offset="0.51" stop-color="#dcc43a"/><stop offset="1" stop-color="#dcc43a"/></linearGradient>
<linearGradient id="fg1" x1="0" x2="1" y1="0" y2="0"><stop offset="0" stop-color="#f2f2f2"/><stop offset="0.5" stop-color="#f6f6f6"/><stop offset="1" stop-color="#dcdcdc"/></linearGradient>
</defs>
<path d="M5.4 8.8 Q33 1.8 60.6 8.8 L51.8 99.8 Q33 104.8 14.2 99.8 Z" fill="url(#fg1)" stroke="#8a8060" stroke-width="0.8"/>
<path d="M6.6 17.2 Q33 16 59 17.2 L51.9 96 Q33 97.5 14.3 96 Z" fill="url(#bg1)"/>
</svg>
</body></html>
